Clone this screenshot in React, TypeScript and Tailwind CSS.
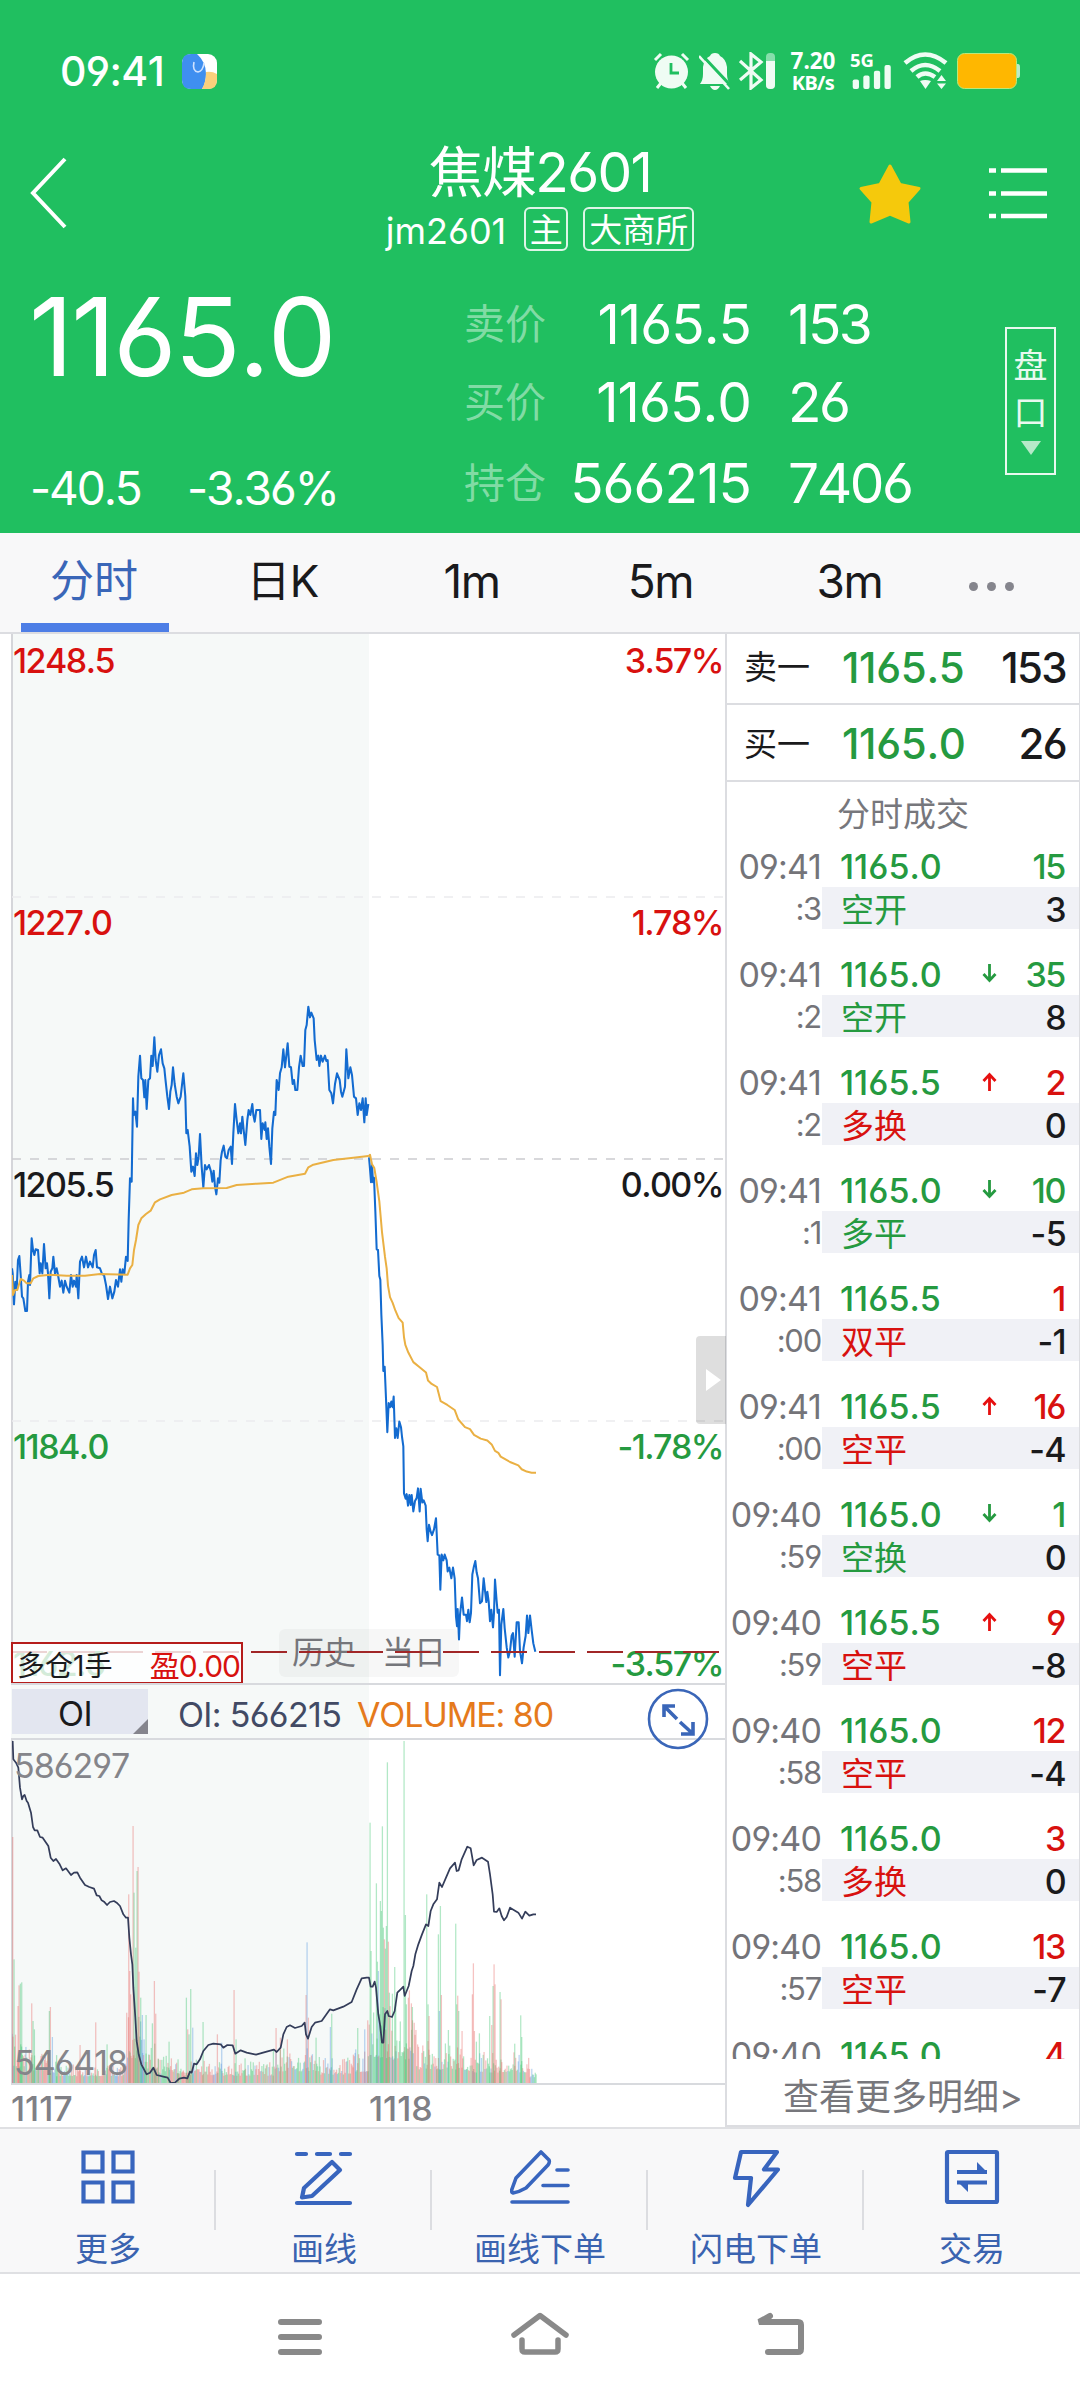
import React from "react";

type Tone = "up" | "down";
type Trade = {
  time: string;
  sec: string;
  price: string;
  arrow?: Tone;
  qty: string;
  tone: Tone;
  kind: string;
  delta: string;
};

const trades: Trade[] = [
  { time: "09:41", sec: ":3", price: "1165.0", qty: "15", tone: "down", kind: "空开", delta: "3" },
  { time: "09:41", sec: ":2", price: "1165.0", arrow: "down", qty: "35", tone: "down", kind: "空开", delta: "8" },
  { time: "09:41", sec: ":2", price: "1165.5", arrow: "up", qty: "2", tone: "up", kind: "多换", delta: "0" },
  { time: "09:41", sec: ":1", price: "1165.0", arrow: "down", qty: "10", tone: "down", kind: "多平", delta: "-5" },
  { time: "09:41", sec: ":00", price: "1165.5", qty: "1", tone: "up", kind: "双平", delta: "-1" },
  { time: "09:41", sec: ":00", price: "1165.5", arrow: "up", qty: "16", tone: "up", kind: "空平", delta: "-4" },
  { time: "09:40", sec: ":59", price: "1165.0", arrow: "down", qty: "1", tone: "down", kind: "空换", delta: "0" },
  { time: "09:40", sec: ":59", price: "1165.5", arrow: "up", qty: "9", tone: "up", kind: "空平", delta: "-8" },
  { time: "09:40", sec: ":58", price: "1165.0", qty: "12", tone: "up", kind: "空平", delta: "-4" },
  { time: "09:40", sec: ":58", price: "1165.0", qty: "3", tone: "up", kind: "多换", delta: "0" },
  { time: "09:40", sec: ":57", price: "1165.0", qty: "13", tone: "up", kind: "空平", delta: "-7" },
];

const lastTrade = { time: "09:40", price: "1165.0", qty: "4" };

/* Chart series, in thirds of a pixel */
const price1 =
  "36,925 38,940 42,1033 46,965 50,990 54,900 58,888 62,945 66,1010 70,1015 76,1053 81,1053 84,965 88,945 90,975 95,835 99,870 103,885 107,868 114,870 119,940 122,910 127,940 132,852 137,925 141,910 144,940 148,1015 152,935 157,925 160,890 165,940 170,925 174,945 180,980 185,962 190,998 195,962 200,980 208,998 213,945 218,980 222,962 228,980 230,945 235,1015 240,905 246,890 252,922 258,890 264,922 270,905 278,922 282,885 287,870 291,922 300,925 306,942 312,945 318,975 324,1017 330,980 337,1015 343,995 348,960 354,980 360,928 364,965 368,928 373,940 378,890 383,903 386,780 390,655 395,665 399,415 401,465 406,455 411,500 415,350 420,287 424,355 429,360 433,412 436,360 440,447 445,360 450,355 454,287 458,318 463,232 467,300 472,335 477,285 483,268 488,310 493,325 496,355 502,410 507,447 511,395 515,375 519,322 524,372 530,410 535,430 542,410 546,375 550,340 556,410 559,520 563,510 569,560 574,635 579,620 584,648 588,580 592,615 596,590 600,522 605,620 610,682 615,615 620,628 627,615 633,635 637,665 641,632 645,680 649,703 654,655 658,668 662,600 666,575 671,557 676,590 681,595 686,570 692,560 696,612 700,520 705,432 710,480 715,520 720,490 723,520 727,470 731,510 736,555 742,480 746,450 751,465 757,432 760,465 764,485 769,450 780,450 784,537 788,490 794,510 796,487 800,537 804,505 808,560 813,612 817,505 822,455 826,465 830,360 836,390 840,340 845,322 850,268 855,322 863,250 868,320 873,322 878,372 882,360 886,390 892,390 897,322 902,287 908,318 912,318 916,210 920,195 925,140 930,172 934,158 941,175 944,240 950,300 955,287 958,318 963,287 968,305 975,287 979,303 983,300 988,390 994,400 999,430 1005,372 1011,340 1019,360 1023,395 1027,410 1035,380 1039,268 1045,355 1051,322 1056,345 1062,410 1068,415 1073,465 1078,430 1083,450 1088,415 1093,487 1097,415 1100,465 1105,432";
const price2 =
  "27,150 30,180 33,215 36,170 39,215 42,203 46,290 50,390 54,392 58,460 61,470 64,560 68,640 70,708 74,697 78,780 82,868 86,792 90,803 94,788 98,803 101,775 105,883 109,858 113,883 118,840 123,855 126,880 130,905 132,1028 137,1042 140,1030 144,1060 148,1032 152,1058 155,1032 160,1075 165,1048 170,1040 174,1015 179,1075 182,1016 187,1052 191,1046 197,1060 200,1122 203,1153 207,1110 212,1128 216,1137 222,1122 228,1093 233,1188 238,1190 241,1280 245,1188 250,1203 254,1188 260,1203 263,1232 268,1222 274,1250 279,1222 284,1250 288,1350 291,1375 293,1330 297,1410 300,1345 306,1300 311,1345 318,1345 321,1362 325,1332 329,1365 333,1340 337,1240 341,1222 346,1205 350,1235 354,1250 360,1315 366,1310 371,1250 376,1290 379,1312 382,1285 386,1310 390,1362 394,1332 399,1378 402,1340 405,1253 410,1310 413,1340 417,1332 420,1503 424,1370 430,1330 434,1380 440,1430 445,1457 450,1440 455,1400 459,1393 464,1455 470,1365 476,1365 480,1440 486,1472 491,1430 497,1400 501,1347 505,1393 510,1347 515,1385 520,1420 526,1442";
const avg1 =
  "36,945 39,1005 45,990 52,990 58,970 62,957 72,962 80,970 92,970 100,955 115,948 150,944 200,947 255,947 300,942 383,944 390,925 397,915 402,870 408,840 415,795 424,775 438,762 452,752 465,727 480,718 515,705 552,698 575,688 610,685 680,684 710,675 770,671 820,668 865,650 915,641 925,622 940,614 1000,600 1060,593 1105,588";
const avg2 =
  "25,148 30,143 36,168 43,178 50,215 58,265 66,345 75,410 80,440 84,485 90,515 98,530 106,550 116,570 128,582 132,620 136,640 145,660 160,685 178,698 198,712 204,733 215,742 231,750 242,787 262,797 284,810 295,835 315,855 330,860 342,875 362,885 382,890 395,900 405,917 415,922 422,932 450,946 475,955 485,965 500,971 515,974 528,974";
const oi1 =
  "38,360 40,415 48,425 55,440 60,500 66,535 70,525 74,522 80,540 84,545 93,575 99,618 104,628 112,628 120,648 128,650 145,675 152,710 160,720 168,714 178,728 188,748 198,742 213,762 222,755 232,754 240,770 255,792 268,798 282,803 290,823 298,825 305,838 312,842 321,852 330,843 342,840 350,845 360,855 370,880 378,890 384,890 388,950 393,1000 397,1030 400,1100 406,1190 410,1260 416,1300 424,1330 432,1345 440,1360 450,1355 460,1340 470,1362 490,1367 503,1370 512,1386 525,1385 538,1373 552,1370 562,1372 570,1352 575,1355 582,1328 590,1330 600,1315 610,1290 625,1272 640,1268 662,1270 670,1280 682,1272 698,1273 706,1298 722,1288 740,1295 768,1301 800,1292 822,1286 830,1293 842,1280 850,1240 860,1218 870,1213 885,1221 905,1215 914,1205 918,1240 924,1253 935,1218 945,1205 965,1200 990,1165 1000,1168 1030,1157 1055,1143 1070,1105 1085,1072 1100,1070 1107,1070 1112,1097 1118,1097 1124,1082 1128,1100 1135,1180 1140,1210 1146,1265 1150,1265 1155,1180 1162,1170 1166,1185 1176,1188 1184,1170 1192,1115 1202,1105 1210,1097 1214,1125 1226,1095 1235,1050 1240,1035 1246,1000 1255,970 1266,940 1278,910 1285,915 1292,870 1300,850 1311,835 1318,785 1326,798 1338,770 1350,742 1365,725 1370,750 1376,748 1385,715 1402,677 1412,682 1421,733 1430,717 1446,710 1464,722 1470,760 1478,820 1482,872 1490,873 1498,862 1505,885 1512,898 1520,888 1530,860 1540,866 1555,875 1566,893 1576,872 1588,884 1600,880 1608,880";

/* Volume spikes: x, top, colour */
const spikes: [number, number, string][] = [
  [38, 648, "r"], [42, 1015, "g"], [54, 1155, "r"], [57, 1093, "r"], [61, 1088, "g"], [65, 1084, "g"], [95, 1147, "r"], [99, 1200, "g"], [103, 1225, "g"],
  [148, 1170, "g"], [151, 1158, "r"], [157, 1248, "b"], [240, 1272, "r"], [287, 1204, "r"], [321, 1270, "g"],
  [386, 820, "r"], [389, 1050, "r"], [392, 1120, "r"], [399, 615, "r"], [402, 815, "g"], [407, 980, "g"], [411, 750, "g"], [414, 738, "r"], [417, 1052, "r"], [422, 1130, "g"],
  [427, 1182, "b"], [432, 1255, "b"], [438, 1182, "g"], [457, 1207, "g"], [463, 1080, "r"], [467, 1178, "r"], [507, 1262, "g"], [534, 1315, "g"],
  [559, 1130, "g"], [563, 1225, "r"], [567, 1240, "g"], [572, 1104, "g"], [578, 1220, "b"], [609, 1203, "g"], [652, 1240, "r"], [665, 1265, "b"], [702, 1107, "r"], [708, 1255, "g"], [735, 1312, "g"],
  [828, 1221, "r"], [841, 1250, "r"], [862, 1255, "r"], [918, 1122, "r"], [921, 964, "b"], [925, 1190, "r"], [948, 1250, "g"], [991, 1218, "b"], [995, 1178, "g"], [1067, 1285, "b"], [1073, 1221, "g"], [1094, 1225, "b"], [1103, 1198, "r"],
  [1110, 605, "g"], [1113, 990, "g"], [1129, 787, "g"], [1132, 1022, "g"], [1135, 1050, "b"], [1141, 840, "g"], [1144, 870, "g"], [1147, 616, "g"], [1150, 920, "g"], [1153, 955, "r"], [1156, 983, "g"], [1159, 915, "g"],
  [1162, 424, "g"], [1165, 962, "r"], [1168, 1115, "g"], [1177, 1118, "g"], [1184, 1038, "g"], [1187, 1150, "g"], [1212, 360, "g"], [1216, 882, "g"], [1219, 1150, "g"], [1225, 1130, "r"], [1228, 1108, "r"], [1234, 1147, "r"], [1237, 1158, "g"],
  [1280, 820, "g"], [1284, 1150, "g"], [1287, 1185, "r"], [1315, 940, "g"], [1318, 1170, "b"], [1321, 855, "g"], [1324, 1122, "r"], [1345, 1227, "g"], [1367, 908, "g"], [1370, 1150, "g"], [1373, 1124, "r"], [1376, 1170, "g"], [1386, 1230, "r"],
  [1417, 1120, "r"], [1420, 1027, "r"], [1423, 1230, "r"], [1429, 1262, "g"], [1438, 1237, "g"], [1469, 1185, "g"], [1475, 1212, "r"], [1479, 1095, "g"], [1482, 1030, "r"], [1485, 1090, "r"], [1500, 1113, "g"], [1503, 1135, "r"],
  [1544, 1268, "g"], [1562, 1183, "g"], [1565, 1248, "g"],
];

const envelope: [number, number, number][] = [
  [36, 80, 150], [80, 115, 110], [115, 170, 90], [170, 380, 60], [380, 425, 230], [425, 475, 130], [475, 550, 85],
  [550, 640, 70], [640, 820, 65], [820, 960, 105], [960, 1060, 75], [1060, 1105, 100], [1105, 1180, 230], [1180, 1250, 215],
  [1250, 1310, 125], [1310, 1400, 120], [1400, 1500, 95], [1500, 1590, 95], [1590, 1609, 50],
];

const noise = (n: number) => {
  const v = Math.sin(n * 12.9898) * 43758.5453;
  return v - Math.floor(v);
};

const fills: Record<string, string> = { r: "#e8625f", g: "#34c36a", b: "#4a90dc" };

const bars: [number, number, string][] = [];
envelope.forEach(([from, to, max]) => {
  for (let x = from; x < to; x += 2.6) {
    const k = noise(x);
    const c = noise(x * 3 + 1);
    bars.push([x, 1385 - max * (0.32 + 0.68 * k * k), c < 0.42 ? "r" : c < 0.85 ? "g" : "b"]);
  }
});
bars.push(...spikes);

function PriceChart() {
  return (
    <svg className="-ml-px block h-[1049px] w-[714px]" viewBox="36 -978 2142 3147" fill="none">
      <g stroke="#ececee" strokeWidth="4" strokeDasharray="27 27">
        <path d="M36 -189H2178M36 1383H2178" />
      </g>
      <path d="M36 597H2178" stroke="#cccccf" strokeWidth="5" strokeDasharray="27 27" />
      <g strokeLinejoin="round">
        <polyline points={price1} stroke="#136bd0" strokeWidth="6.2" />
        <g transform="translate(1080 420) scale(1 1.148)">
          <polyline points={price2} stroke="#136bd0" strokeWidth="2.05" vectorEffect="non-scaling-stroke" />
          <polyline points={avg2} stroke="#eab043" strokeWidth="2" vectorEffect="non-scaling-stroke" />
        </g>
        <polyline points={avg1} stroke="#eab043" strokeWidth="6" />
      </g>
    </svg>
  );
}

function OiChart() {
  return (
    <svg className="-ml-px block h-[343px] w-[714px]" viewBox="36 357 2142 1029" fill="none">
      {bars.map(([x, top, c], i) => (
        <rect key={i} x={x - 1.7} y={top} width="3.8" height={1386 - top} fill={fills[c]} opacity="0.38" />
      ))}
      <polyline points={oi1} stroke="#343d5a" strokeWidth="5.2" strokeLinejoin="round" />
    </svg>
  );
}

function StatusBar() {
  return (
    <div className="flex h-[142px] items-center pl-[60px] text-white">
      <span className="w-[122px] text-[41px] font-medium leading-none tracking-[-0.015em]">09:41</span>
      <svg className="h-[35px] w-[35px]" viewBox="0 0 35 35">
        <rect width="35" height="35" rx="9" fill="#fff" />
        <path d="M9 0H15Q24 8 24 20Q24 29 20 35H9Q0 35 0 26V9Q0 0 9 0Z" fill="#3f8ff0" />
        <path d="M24 18Q30 17 35 20V26Q35 35 26 35H20Q24 28 24 18Z" fill="#fad07c" />
        <path d="M12 8Q10 17 16 18Q21 17 22 9" fill="none" stroke="#cfe2ff" strokeWidth="1.6" />
      </svg>
      <svg className="ml-[436px] h-[38px] w-[37px]" viewBox="0 0 37 38" fill="#effcf4">
        <circle cx="18.500" cy="20" r="16.500" />
        <path d="M2 8L8 2M35 8L29 2M4 36L8 31M33 36L29 31" stroke="#effcf4" strokeWidth="3" />
        <path d="M18 11V21H26" fill="none" stroke="#20bf60" strokeWidth="2.800" />
      </svg>
      <svg className="ml-[9px] h-[38px] w-[32px]" viewBox="0 0 32 38">
        <path d="M1 32Q4 28 4 22V15Q5 7 11 4Q12 1 16 1Q20 1 21 4Q27 7 28 15V22Q28 28 31 32ZM11 34H21Q19 38 16 38Q13 38 11 34Z" fill="#effcf4" />
        <path d="M2 2L32 34" stroke="#20bf60" strokeWidth="3" />
        <path d="M0 4L30 37" stroke="#effcf4" strokeWidth="2.600" />
      </svg>
      <svg className="ml-[8px] h-[38px] w-[37px]" viewBox="0 0 37 38" fill="none">
        <path d="M1 9L22 28L12 36V2L22 10L1 28" stroke="#effcf4" strokeWidth="3.200" />
        <rect x="27" y="1" width="9" height="36" rx="4" fill="#86dfab" />
        <path d="M27 9H36V33Q36 37 31.500 37Q27 37 27 33Z" fill="#effcf4" />
      </svg>
      <span className="ml-[13px] flex w-[48px] flex-col text-center font-['Noto_Sans'] text-[22.5px] font-bold leading-[23px]">
        <span>7.20</span>
        <span className="text-[20px] leading-[22px] tracking-[-0.03em]">KB/s</span>
      </span>
      <span className="ml-[13px] flex h-[38px] w-[43px] flex-col">
        <span className="font-['Noto_Sans'] text-[18.5px] font-bold leading-[16px]">5G</span>
        <svg className="-mt-[4px] h-[27px] w-[43px]" viewBox="0 0 43 27" fill="#effcf4">
          <rect x="2" y="16" width="6.500" height="10" rx="2" />
          <rect x="13" y="12" width="6.500" height="14" rx="2" />
          <rect x="24" y="7" width="6.500" height="19" rx="2" />
          <rect x="35" y="1" width="6.500" height="25" rx="2" />
        </svg>
      </span>
      <svg className="ml-[10px] h-[38px] w-[45px]" viewBox="0 0 45 38" fill="none">
        <g stroke="#effcf4" strokeWidth="4.500">
          <path d="M2 11Q22 -6 43 11M8 19Q22 7 37 19M14 25Q22 18 32 25" />
        </g>
        <path d="M17 29Q22 27 28 29L22.500 37ZM34 29L38.500 23L43 29ZM34 31.500L38.500 37L43 31.500Z" fill="#effcf4" />
      </svg>
      <svg className="ml-[9px] h-[38px] w-[64px]" viewBox="0 0 64 38">
        <path d="M59 12H61Q63 12 63 15V23Q63 26 61 26H59Z" fill="#b9ecc9" />
        <rect x="0.500" y="1.500" width="59" height="35" rx="7" fill="#ffb700" stroke="#b9e87a" />
      </svg>
    </div>
  );
}

function QuoteRow({ label, value, count, tall }: { label: string; value: string; count: string; tall?: boolean }) {
  return (
    <div className={`flex items-center whitespace-nowrap leading-none ${tall ? "h-[84px]" : "h-[78px]"}`}>
      <span className="w-[86px] text-[41px] text-white/45">{label}</span>
      <span className="w-[201px] text-right text-[55px] tracking-[-0.018em]">{value}</span>
      <span className="ml-[37px] text-[55px] tracking-[-0.045em]">{count}</span>
    </div>
  );
}

function Header() {
  return (
    <header className="flex h-[533px] flex-col bg-[#20bf60] text-white">
      <StatusBar />
      <div className="flex h-[139px] items-start justify-between">
        <div className="w-[300px] pl-[29px] pt-[14px]">
          <svg className="h-[74px] w-[40px]" viewBox="0 0 40 74" fill="none" stroke="#fff" strokeWidth="4">
            <path d="M36 3L4 37L36 71" />
          </svg>
        </div>
        <div className="flex flex-col items-center">
          <h1 className="h-[60px] text-[55px] font-normal leading-[61px] tracking-[-0.03em]">焦煤2601</h1>
          <div className="mt-[5px] flex h-[44px] items-center text-[36px]">
            <span className="pt-[3px] leading-[48px]">jm2601</span>
            <span className="ml-[18px] flex h-[44px] w-[44px] items-center justify-center rounded-[6px] border-2 border-white/85 pt-[2px] text-[33px] leading-none">主</span>
            <span className="ml-[15px] flex h-[44px] w-[111px] items-center justify-center rounded-[6px] border-2 border-white/85 pt-[2px] text-[33px] leading-none">大商所</span>
          </div>
        </div>
        <div className="flex w-[300px] justify-end gap-[67px] pr-[33px]">
          <svg className="mt-[20px] h-[62px] w-[64px]" viewBox="0 0 64 62">
            <path d="M32 4L42 22.500L61 26.500L49 40L51 60L32 52L13 60L15 40L3 26.500L22 22.500Z" fill="#f5c90c" stroke="#f5c90c" strokeWidth="3" strokeLinejoin="round" />
          </svg>
          <svg className="mt-[25px] h-[54px] w-[58px]" viewBox="0 0 58 54" stroke="#fff" strokeWidth="4.500">
            <path d="M0 3.500H7M12 3.500H58M0 26.500H7M12 26.500H58M0 49H7M12 49H58" />
          </svg>
        </div>
      </div>
      <div className="flex">
        <div className="w-[464px]">
          <div className="h-[110px] pl-[29px] text-[109px] leading-[110px] tracking-[-0.02em]">1165.0</div>
          <div className="mt-[74px] flex pl-[30px] text-[46px] leading-[46px] tracking-[-0.045em]">
            <span className="w-[157px]">-40.5</span>
            <span>-3.36%</span>
          </div>
        </div>
        <div className="mt-[4px] w-[541px]">
          <QuoteRow label="卖价" value="1165.5" count="153" />
          <QuoteRow label="买价" value="1165.0" count="26" />
          <QuoteRow label="持仓" value="566215" count="7406" tall />
        </div>
        <div className="mt-[46px] flex h-[148px] w-[51px] flex-col items-center border-2 border-white/90 pt-[13px] text-[34px] leading-[47px] text-white/90">
          <span>盘</span>
          <span>口</span>
          <svg className="mt-[5px] h-[14px] w-[20px]" viewBox="0 0 20 14" fill="#b5e9c8">
            <path d="M0 0H20L10 14Z" />
          </svg>
        </div>
      </div>
    </header>
  );
}

function Tabs() {
  return (
    <nav className="flex h-[101px] border-b-2 border-[#dcdde1] bg-[#f8f8f9] text-[46px] leading-[96px] text-[#1a1a1c]">
      <div className="relative w-[188px] text-center text-[44px] text-[#3a66b8]">
        分时
        <span className="absolute bottom-0 left-[21px] h-[9px] w-[148px] bg-[#4d7ee6]" />
      </div>
      <div className="w-[189px] text-center text-[44px] tracking-[-0.02em]">日K</div>
      <div className="w-[189px] text-center tracking-[-0.03em]">1m</div>
      <div className="w-[189px] text-center tracking-[-0.03em]">5m</div>
      <div className="w-[189px] text-center tracking-[-0.03em]">3m</div>
      <div className="flex w-[95px] items-center justify-center gap-[9px] pt-[7px]">
        <span className="h-[9px] w-[9px] rounded-full bg-[#85858d]" />
        <span className="h-[9px] w-[9px] rounded-full bg-[#85858d]" />
        <span className="h-[9px] w-[9px] rounded-full bg-[#85858d]" />
      </div>
    </nav>
  );
}

function ScaleRow({ left, right, tone }: { left: string; right: string; tone: string }) {
  return (
    <div className={`flex justify-between pr-[2px] text-[34px] font-medium leading-[40px] tracking-[-0.045em] ${tone}`}>
      <span>{left}</span>
      <span>{right}</span>
    </div>
  );
}

function ChartPanel() {
  return (
    <section className="flex w-[727px] flex-col border-r-2 border-[#dcdde1] pl-[11px]">
      <div className="relative h-[1049px] border-l-2 border-[#d5d6da] bg-[linear-gradient(to_right,#f6f9f8_356px,#fff_356px)]">
        <PriceChart />
        <div className="absolute inset-x-0 top-[7px]"><ScaleRow left="1248.5" right="3.57%" tone="text-[#d8110f]" /></div>
        <div className="absolute inset-x-0 top-[269px]"><ScaleRow left="1227.0" right="1.78%" tone="text-[#d8110f]" /></div>
        <div className="absolute inset-x-0 top-[531px]"><ScaleRow left="1205.5" right="0.00%" tone="text-[#1a1a1c]" /></div>
        <div className="absolute inset-x-0 top-[793px]"><ScaleRow left="1184.0" right="-1.78%" tone="text-[#259a40]" /></div>
        <div className="absolute inset-x-0 top-[1010px]"><ScaleRow left="1162.5" right="-3.57%" tone="text-[#259a40]" /></div>
        <div className="absolute left-[266px] top-[995px] flex h-[48px] w-[180px] items-center rounded-[6px] bg-black/[0.03] text-[32px] leading-[52px] text-[#75767b]">
          <span className="w-[90px] text-center">历史</span>
          <span className="w-[90px] text-center">当日</span>
        </div>
        <svg className="absolute left-[-2px] top-[1016px] h-[4px] w-[709px]" viewBox="0 0 709 4">
          <path d="M0 2H709" stroke="#a12627" strokeWidth="2.2" strokeDasharray="36 12" />
        </svg>
        <div className="absolute left-[-2px] top-[1008px] flex h-[42px] w-[232px] items-center justify-between border-2 border-[#b51d1b] bg-white/80 pl-[4px] pr-px pt-[6px] text-[28px] leading-none text-[#1a1a1c]">
          <span>多仓1手</span>
          <span className="text-[30px] tracking-[-0.035em] text-[#d8110f]">盈0.00</span>
        </div>
        <div className="absolute right-[-1px] top-[702px] flex h-[88px] w-[30px] items-center rounded-l-[4px] bg-black/[0.13] pl-[10px]">
          <svg className="h-[22px] w-[15px]" viewBox="0 0 15 22" fill="#fff"><path d="M0 0L15 11L0 22Z" /></svg>
        </div>
      </div>
      <div className="relative z-10 flex h-[57px] items-center border-y-2 border-[#d8dade] bg-[linear-gradient(to_right,#f6f9f8_358px,#fff_358px)] text-[34px] leading-[45px] tracking-[-0.02em]">
        <span className="relative ml-[1px] h-[45px] w-[136px] bg-[#e3e6f0] pr-[10px] text-center leading-[50px] text-[#1a1a1c]">
          OI
          <svg className="absolute bottom-0 right-0 h-[15px] w-[15px]" viewBox="0 0 15 15" fill="#85858d"><path d="M15 0V15H0Z" /></svg>
        </span>
        <span className="ml-[30px] w-[179px] pt-[5px] text-[#424a64]">OI: 566215</span>
        <span className="pt-[5px] tracking-[-0.032em] text-[#e57a1c]">VOLUME: 80</span>
        <svg className="absolute right-[16px] top-[3px] h-[62px] w-[62px]" viewBox="0 0 62 62" fill="none" stroke="#3a66b8">
          <circle cx="31" cy="31" r="29" strokeWidth="2.600" />
          <path d="M17 29V18H28M18.500 19.500L30 31M46 34V46H34M45 45L33 34" strokeWidth="3.600" />
        </svg>
      </div>
      <div className="relative h-[343px] border-l-2 border-[#d5d6da] bg-[linear-gradient(to_right,#f6f9f8_356px,#fff_356px)]">
        <OiChart />
        <span className="absolute left-px top-[8px] text-[34px] leading-[36px] tracking-[-0.03em] text-[#85858a]">586297</span>
        <span className="absolute bottom-[2px] left-px text-[34px] leading-[36px] tracking-[-0.03em] text-[#85858a]">546418</span>
      </div>
      <div className="flex h-[44px] border-t-2 border-[#d8dade] pt-[2px] text-[34px] font-medium leading-[44px] text-[#808086]">
        <span className="w-[358px]">1117</span>
        <span>1118</span>
      </div>
    </section>
  );
}

function Arrow({ dir }: { dir?: Tone }) {
  if (!dir) return null;
  const up = dir === "up";
  return (
    <svg className="h-[19px] w-[15px]" viewBox="0 0 15 19" fill="none" stroke={up ? "#e60f0f" : "#259a40"} strokeWidth="2.800">
      <path d={up ? "M7.500 19V2M1.500 9L7.500 2.500L13.500 9" : "M7.500 0V17M1.500 10L7.500 16.500L13.500 10"} />
    </svg>
  );
}

function QuoteLine({ time, price, qty, arrow, tone }: { time: string; price: string; qty: string; arrow?: Tone; tone: string }) {
  return (
    <div className="flex h-[41px] items-center pr-[14px] text-[34px] leading-[41px] tracking-[-0.04em]">
      <span className="w-[94px] text-right tracking-[-0.025em] text-[#747479]">{time}</span>
      <span className="ml-[19px] w-[142px] font-medium tracking-normal text-[#259a40]">{price}</span>
      <span className="-mt-[3px] flex w-[20px] items-center"><Arrow dir={arrow} /></span>
      <span className={`flex-1 text-right font-medium ${tone}`}>{qty}</span>
    </div>
  );
}

function TradeRow({ t }: { t: Trade }) {
  const tone = t.tone === "up" ? "text-[#d8110f]" : "text-[#259a40]";
  return (
    <li className="mb-[25px]">
      <QuoteLine time={t.time} price={t.price} qty={t.qty} arrow={t.arrow} tone={tone} />
      <div className="flex h-[42px]">
        <span className="w-[95px] pr-[1px] text-right text-[31px] leading-[43px] tracking-[-0.04em] text-[#747479]">{t.sec}</span>
        <div className="flex flex-1 justify-between bg-[#f0f1f6] pl-[19px] pr-[13px] text-[34px] leading-[46px] tracking-[-0.02em]">
          <span className={`text-[33px] tracking-normal ${tone}`}>{t.kind}</span>
          <span className="font-medium text-[#1a1a1c]">{t.delta}</span>
        </div>
      </div>
    </li>
  );
}

function BookRow({ label, price, qty, cls }: { label: string; price: string; qty: string; cls: string }) {
  return (
    <div className={`flex shrink-0 items-center border-b-2 border-[#dcdde1] pl-[17px] pr-[13px] text-[42px] font-medium leading-none tracking-[-0.04em] ${cls}`}>
      <span className="w-[98px] text-[33px] font-normal tracking-normal text-[#1a1a1c]">{label}</span>
      <span className="tracking-[-0.008em] text-[#259a40]">{price}</span>
      <span className="flex-1 text-right text-[#1a1a1c]">{qty}</span>
    </div>
  );
}

function TradesPanel() {
  return (
    <section className="flex w-[353px] flex-col border-b-2 border-r border-[#dcdde1]">
      <BookRow label="卖一" price="1165.5" qty="153" cls="h-[71px] pb-[2px]" />
      <BookRow label="买一" price="1165.0" qty="26" cls="h-[77px] pt-[3px]" />
      <h2 className="h-[64px] shrink-0 text-center text-[33px] font-normal leading-[65px] text-[#77777c]">分时成交</h2>
      <ul className="h-[1213px] shrink-0 overflow-hidden">
        {trades.map((t, i) => (
          <TradeRow key={i} t={t} />
        ))}
        <li>
          <QuoteLine {...lastTrade} tone="text-[#d8110f]" />
        </li>
      </ul>
      <div className="h-[66px] pt-[5px] text-center text-[36px] leading-[66px] text-[#77777c]">查看更多明细&gt;</div>
    </section>
  );
}

const tools: { label: string; icon: React.ReactNode }[] = [
  {
    label: "更多",
    icon: <path d="M5 5H24V24H5ZM35 5H54V24H35ZM5 35H24V54H5ZM35 35H54V54H35Z" transform="translate(0.500 -0.500)" />,
  },
  {
    label: "画线",
    icon: (
      <g strokeLinecap="round" strokeLinejoin="round">
        <path d="M3 6H12M23 6H36M47 6H56M3 55H56" />
        <path d="M38 14L46 22L18 48L8 49.500L10 40Z" />
      </g>
    ),
  },
  {
    label: "画线下单",
    icon: (
      <g strokeLinecap="round" strokeLinejoin="round" strokeWidth="3.600">
        <path d="M47 22H58M33 37.500H58M2 54H58" />
        <path d="M31 4L39 12Q40 14 38 17L16 40Q9 44 3 45Q1 44 2 41L6 30Z" />
      </g>
    ),
  },
  {
    label: "闪电下单",
    icon: <path d="M16 5H52L39 22.500H53L23 58L26 31H10Z" strokeLinejoin="round" transform="translate(-1 -1)" />,
  },
  {
    label: "交易",
    icon: (
      <>
        <rect x="5" y="4" width="50" height="50" rx="1" />
        <path d="M15 24H45M15 34.500H45" />
        <path d="M35 14L45 24H35ZM26 44L16 34H26Z" fill="#3865be" stroke="none" />
      </>
    ),
  },
];

function Toolbar() {
  return (
    <footer className="flex h-[147px] items-start border-y-2 border-[#dfe0e3] bg-[#f8f8f9]">
      {tools.map((t, i) => (
        <div key={t.label} className="relative flex flex-1 flex-col items-center pt-[19px]">
          <svg className="h-[60px] w-[60px]" viewBox="0 0 60 60" fill="none" stroke="#3865be" strokeWidth="4.200">
            {t.icon}
          </svg>
          <span className="mt-[16px] text-[33px] leading-[50px] text-[#3a63b0]">{t.label}</span>
          {i < 4 && <span className="absolute right-0 top-[41px] h-[60px] w-[2px] bg-[#dcdde1]" />}
        </div>
      ))}
    </footer>
  );
}

function NavBar() {
  return (
    <div className="flex h-[126px] items-start justify-between bg-white px-[270px] pt-[32px]">
      <svg className="h-[60px] w-[60px]" viewBox="0 0 60 60" fill="none" stroke="#898989" strokeWidth="6" strokeLinecap="round">
        <path d="M11 16H49M11 31H49M11 46H49" />
      </svg>
      <svg className="h-[60px] w-[60px]" viewBox="0 0 60 60" fill="none" stroke="#898989" strokeWidth="5.500" strokeLinecap="round" strokeLinejoin="round">
        <path d="M4 29L30 9.500L56 29M12 34V43Q12 46 15 46H45Q48 46 48 43V34" />
      </svg>
      <svg className="h-[60px] w-[60px]" viewBox="0 0 60 60" fill="none" stroke="#898989" strokeWidth="6" strokeLinecap="round">
        <path d="M20 10L9 16H48Q51 16 51 19V43Q51 46 48 46H18" />
      </svg>
    </div>
  );
}

export default function App() {
  return (
    <div className="flex h-[2400px] w-[1080px] flex-col overflow-hidden bg-white font-[Inter,'Noto_Sans_CJK_SC',sans-serif] [font-feature-settings:'cv03','cv04'] [font-kerning:none]">
      <Header />
      <Tabs />
      <main className="flex h-[1493px]">
        <ChartPanel />
        <TradesPanel />
      </main>
      <Toolbar />
      <NavBar />
    </div>
  );
}
